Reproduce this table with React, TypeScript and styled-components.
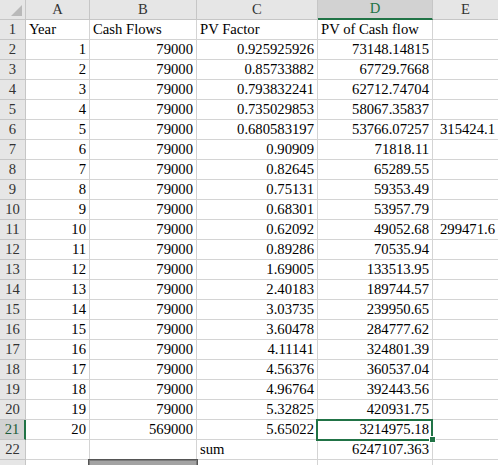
import React from "react";
import styled, { createGlobalStyle, css } from "styled-components";

const Global = createGlobalStyle`
  html, body { margin: 0; padding: 0; background: #ffffff; }
  body { font-family: "Liberation Serif", "Times New Roman", serif; overflow: hidden; }
`;

const GREEN = "#217346";
const GRID = "#d4d4d4";
const HEAD_BG = "#e6e6e6";
const HEAD_LINE = "#c6c6c6";

const Sheet = styled.div`
  position: relative;
  width: 498px;
  height: 465px;
  overflow: hidden;
  background: #fff;
`;

const Grid = styled.div`
  display: grid;
  grid-template-columns: 26px 64px 107px 121px 115px 66px;
  grid-auto-rows: 20px;
  font-size: 14.667px;
  color: #000;
`;

const Corner = styled.div`
  position: relative;
  background: ${HEAD_BG};
  border-right: 1px solid ${HEAD_LINE};
  border-bottom: 1px solid ${HEAD_LINE};
  box-sizing: border-box;
  &::after {
    content: "";
    position: absolute;
    right: 3px;
    bottom: 3px;
    width: 0;
    height: 0;
    border-left: 11px solid transparent;
    border-bottom: 11px solid #b9b9b9;
  }
`;

const ColHead = styled.div<{ $sel?: boolean }>`
  box-sizing: border-box;
  background: ${HEAD_BG};
  border-right: 1px solid ${HEAD_LINE};
  border-bottom: 1px solid ${HEAD_LINE};
  text-align: center;
  line-height: 18px;
  color: #333;
  ${(p) =>
    p.$sel &&
    css`
      background: #d2d2d2;
      color: ${GREEN};
      border-bottom: 2px solid ${GREEN};
      line-height: 17px;
    `}
`;

const RowHead = styled.div<{ $sel?: boolean }>`
  box-sizing: border-box;
  background: ${HEAD_BG};
  border-right: 1px solid ${HEAD_LINE};
  border-bottom: 1px solid ${HEAD_LINE};
  text-align: center;
  line-height: 19px;
  color: #333;
  ${(p) =>
    p.$sel &&
    css`
      background: #d2d2d2;
      color: #1e5c3a;
      border-right: 2px solid ${GREEN};
    `}
`;

const Cell = styled.div<{ $align?: "left" | "right"; $sel?: boolean }>`
  position: relative;
  box-sizing: border-box;
  border-right: 1px solid ${GRID};
  border-bottom: 1px solid ${GRID};
  line-height: 19px;
  padding: 0 3px 0 3px;
  white-space: nowrap;
  text-align: ${(p) => (p.$align === "right" ? "right" : "left")};
  ${(p) =>
    p.$sel &&
    css`
      z-index: 2;
      &::before {
        content: "";
        position: absolute;
        left: -2px;
        top: -1px;
        right: -1px;
        bottom: -2px;
        border: 2px solid ${GREEN};
        pointer-events: none;
      }
      &::after {
        content: "";
        position: absolute;
        right: -4px;
        bottom: -4px;
        width: 5px;
        height: 5px;
        background: ${GREEN};
        border: 1px solid #fff;
      }
    `}
`;

const DragBox = styled.div`
  position: absolute;
  left: 88px;
  top: 459px;
  width: 110px;
  height: 12px;
  box-sizing: border-box;
  background: #a3a3a3;
  border: 1px solid #555;
  box-shadow: inset 0 0 0 1px #7d7d7d;
`;

type Row = (string | number)[];

const rows: Row[] = [
  ["Year", "Cash Flows", "PV Factor", "PV of Cash flow", ""],
  [1, 79000, "0.925925926", "73148.14815", ""],
  [2, 79000, "0.85733882", "67729.7668", ""],
  [3, 79000, "0.793832241", "62712.74704", ""],
  [4, 79000, "0.735029853", "58067.35837", ""],
  [5, 79000, "0.680583197", "53766.07257", "315424.1"],
  [6, 79000, "0.90909", "71818.11", ""],
  [7, 79000, "0.82645", "65289.55", ""],
  [8, 79000, "0.75131", "59353.49", ""],
  [9, 79000, "0.68301", "53957.79", ""],
  [10, 79000, "0.62092", "49052.68", "299471.6"],
  [11, 79000, "0.89286", "70535.94", ""],
  [12, 79000, "1.69005", "133513.95", ""],
  [13, 79000, "2.40183", "189744.57", ""],
  [14, 79000, "3.03735", "239950.65", ""],
  [15, 79000, "3.60478", "284777.62", ""],
  [16, 79000, "4.11141", "324801.39", ""],
  [17, 79000, "4.56376", "360537.04", ""],
  [18, 79000, "4.96764", "392443.56", ""],
  [19, 79000, "5.32825", "420931.75", ""],
  [20, 569000, "5.65022", "3214975.18", ""],
  ["", "", "sum", "6247107.363", ""],
  ["", "", "", "", ""],
];

const cols = ["A", "B", "C", "D", "E"];
const SEL_ROW = 21;
const SEL_COL = 3;
const VISIBLE_LABEL_ROWS = 22;

function alignOf(r: number, v: string | number): "left" | "right" {
  if (r === 1) return "left";
  if (typeof v === "number") return "right";
  if (v === "sum") return "left";
  return /^[\d.]+$/.test(v) ? "right" : "left";
}

export default function App() {
  return (
    <>
      <Global />
      <Sheet>
        <Grid>
          <Corner />
          {cols.map((c, i) => (
            <ColHead key={c} $sel={i === SEL_COL}>
              {c}
            </ColHead>
          ))}
          {rows.map((row, ri) => {
            const r = ri + 1;
            return (
              <React.Fragment key={r}>
                <RowHead $sel={r === SEL_ROW}>
                  {r <= VISIBLE_LABEL_ROWS ? r : ""}
                </RowHead>
                {row.map((v, ci) => (
                  <Cell
                    key={ci}
                    $align={alignOf(r, v)}
                    $sel={r === SEL_ROW && ci === SEL_COL}
                  >
                    {v}
                  </Cell>
                ))}
              </React.Fragment>
            );
          })}
        </Grid>
        <DragBox />
      </Sheet>
    </>
  );
}
